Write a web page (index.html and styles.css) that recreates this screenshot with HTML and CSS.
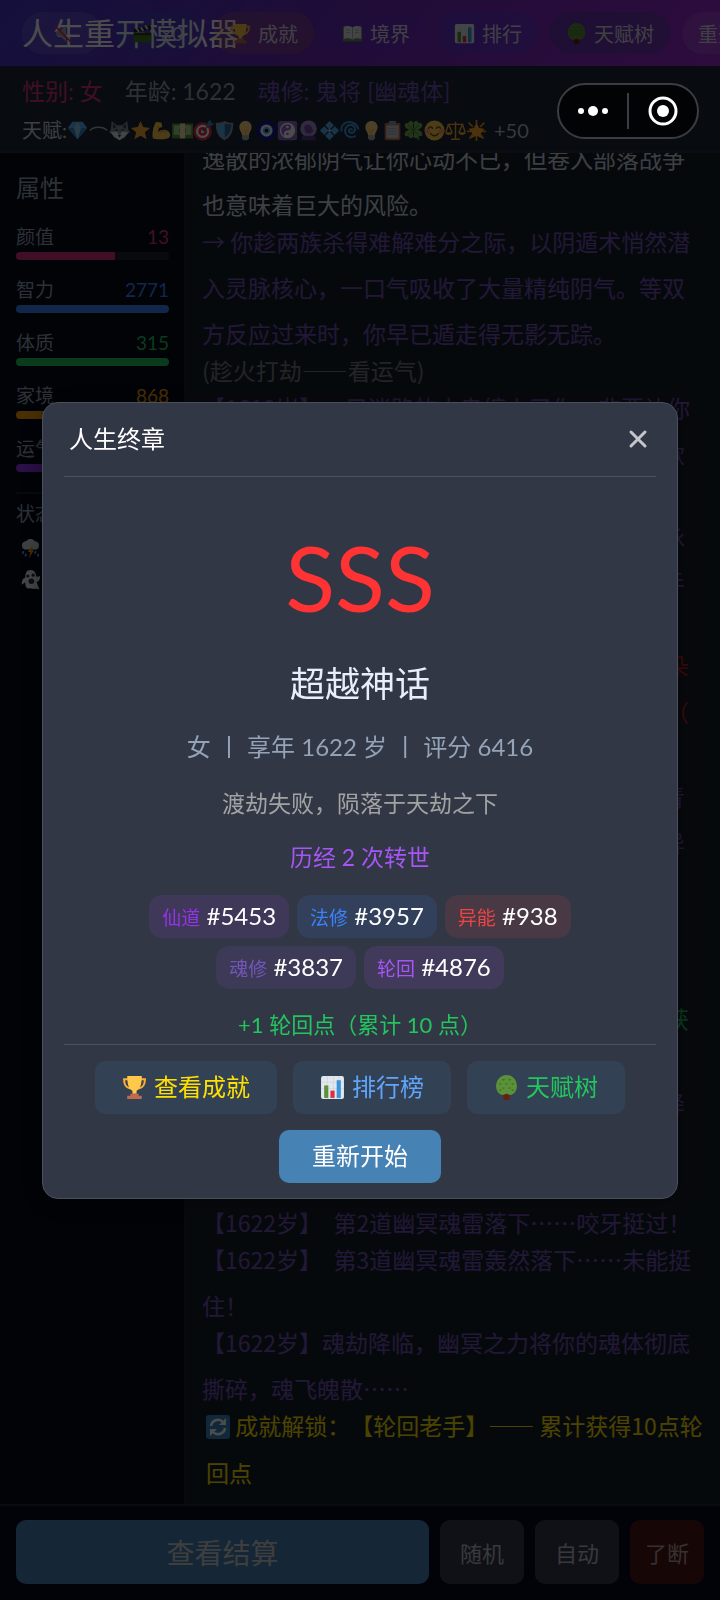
FILE: index.html
```
<!DOCTYPE html>
<html lang="zh-CN">
<head>
<meta charset="utf-8">
<title>人生重开模拟器</title>
<meta name="viewport" content="width=device-width,initial-scale=1">
<link rel="stylesheet" href="styles.css">
</head>
<body>
<!-- icon sprite -->
<svg class="sprite" xmlns="http://www.w3.org/2000/svg">
  <symbol id="mute" viewBox="0 0 24 24"><path d="M5 9h4l7-6v18l-7-6H5z" fill="#9aa5ad"/><path d="M3 3l18 18" stroke="#dd2e44" stroke-width="2"/></symbol>
  <symbol id="clapper" viewBox="0 0 24 24"><path d="M2 11h20v11H2z" fill="#3f7d20"/><path d="M2 7l19-5 1 5-20 4z" fill="#222"/><path d="M5 6l3 4M10 5l3 4M15 3l3 4" stroke="#ddd" stroke-width="2"/><path d="M2 11h20v3H2z" fill="#333"/></symbol>
  <symbol id="trophy" viewBox="0 0 24 24"><path d="M6 4H2c0 6 2 8 6 9M18 4h4c0 6-2 8-6 9" fill="none" stroke="#ffac33" stroke-width="2"/><path d="M5 1h14c0 9-2 13-5 14v3h-4v-3C7 14 5 10 5 1z" fill="#ffc84a"/><path d="M8 18h8v2h3v3H5v-3h3z" fill="#c1694f"/></symbol>
  <symbol id="book" viewBox="0 0 24 24"><path d="M1 5h22v16H1z" fill="#5c913b"/><path d="M2 4c4-1 7-1 10 1 3-2 6-2 10-1v14c-4-1-7-1-10 1-3-2-6-2-10-1z" fill="#dfe5e8"/><path d="M12 5v14M5 8h4M5 11h4M15 8h4M15 11h4" stroke="#99aab5"/></symbol>
  <symbol id="chart" viewBox="0 0 24 24"><rect x="1" y="1" width="22" height="22" rx="2" fill="#e1e8ed"/><path d="M1 7h22M1 13h22M7 1v22M13 1v22M18 1v22" stroke="#c8d4dc" stroke-width=".6"/><path d="M4 10h4v12H4z" fill="#5c913b"/><path d="M10 15h4v7h-4z" fill="#dd2e44"/><path d="M16 5h4v17h-4z" fill="#3b94d9"/></symbol>
  <symbol id="tree" viewBox="0 0 24 24"><path d="M9 17h6v7H9z" fill="#662113"/><path d="M12 0c6 0 10 5 10 11 0 4-3 8-6 8-1 1-2-1-4-1s-3 2-4 1c-3 0-6-4-6-8C2 5 6 0 12 0z" fill="#5c913b"/><path d="M8 4l1 1 1-1M14 4l1 1 1-1M5 8l1 1 1-1M11 8l1 1 1-1M17 8l1 1 1-1M8 12l1 1 1-1M14 12l1 1 1-1M5 14l1 1 1-1M17 14l1 1 1-1" fill="none" stroke="#3e721d"/></symbol>
  <symbol id="diamond" viewBox="0 0 24 24"><path d="M6 2h12l5 7-11 13L1 9z" fill="#5dadec"/><path d="M1 9h22L12 22z" fill="#3b88c3"/><path d="M8 9l4-7 4 7-4 13z" fill="#8ccaf7"/></symbol>
  <symbol id="arc" viewBox="0 0 24 24"><path d="M2 12c5-5 15-5 20 0" fill="none" stroke="#aeb6ba" stroke-width="1.6"/></symbol>
  <symbol id="wolf" viewBox="0 0 24 24"><path d="M3 1l6 5h6l6-5 1 10 2 3-3 2-3 4-6 3-6-3-3-4-3-2 2-3z" fill="#7d8f9b"/><path d="M5 4l3 4-3 2zM19 4l-3 4 3 2z" fill="#292f33"/><path d="M2 14l7-1 3 5 3-5 7 1-4 5-6 4-6-4z" fill="#e1e8ed"/><path d="M10 17h4l-2 3z" fill="#292f33"/><path d="M7 11l3 1M17 11l-3 1" stroke="#292f33" stroke-width="1.5"/></symbol>
  <symbol id="star" viewBox="0 0 24 24"><path d="M12 1l3 7 8 1-6 5 2 8-7-4-7 4 2-8-6-5 8-1z" fill="#ffac33"/></symbol>
  <symbol id="arm" viewBox="0 0 24 24"><path d="M6 2l6 1 1 5-4 1-1 5c5-5 13-3 14 3 0 5-9 6-20 4C1 14 3 6 6 2z" fill="#ffcc4d"/><path d="M9 9l-2-2M10 15c2-3 5-3 8-1" fill="none" stroke="#e39b2b" stroke-width="1.5"/></symbol>
  <symbol id="money" viewBox="0 0 24 24"><path d="M0 4h24v17H0z" fill="#5c913b"/><path d="M2 6h20v11H2z" fill="#a7d28b"/><circle cx="12" cy="12" r="4" fill="#5c913b"/><path d="M9 4h6v17H9z" fill="#ffe8b6"/></symbol>
  <symbol id="target" viewBox="0 0 24 24"><circle cx="11" cy="13" r="10.500" fill="#dd2e44"/><circle cx="11" cy="13" r="7.500" fill="#fff"/><circle cx="11" cy="13" r="5" fill="#dd2e44"/><circle cx="11" cy="13" r="2" fill="#fff"/><path d="M11 13l9-9" stroke="#557" stroke-width="1.500"/><path d="M16 7l1-5 3-2 1 3 3 1-3 3z" fill="#3b88c3"/></symbol>
  <symbol id="shield" viewBox="0 0 24 24"><path d="M12 1c3 2 6 2 10 2 0 9-2 16-10 20C4 19 2 12 2 3c4 0 7 0 10-2z" fill="#8899a6"/><path d="M12 4c2 1 5 1 8 1-1 8-3 12-8 15z" fill="#226699"/><path d="M12 4C10 5 7 5 4 5c1 8 3 12 8 15z" fill="#55acee"/></symbol>
  <symbol id="bulb" viewBox="0 0 24 24"><path d="M12 1c4 0 7 3 7 7 0 5-3 5-3 10H8c0-5-3-5-3-10 0-4 3-7 7-7z" fill="#ffd983"/><path d="M9 11l3 2 3-2M12 13v5" fill="none" stroke="#ffac33"/><path d="M8 18h8v3l-2 2h-4l-2-2z" fill="#99aab5"/></symbol>
  <symbol id="nazar" viewBox="0 0 24 24"><circle cx="12" cy="12" r="11" fill="#1414a0"/><circle cx="12" cy="12" r="7" fill="#e8f4fa"/><circle cx="12" cy="12" r="4" fill="#5dadec"/><circle cx="12" cy="12" r="2" fill="#000"/></symbol>
  <symbol id="yinyang" viewBox="0 0 24 24"><rect x="1" y="1" width="22" height="22" rx="3" fill="#9266cc"/><circle cx="12" cy="12" r="8" fill="none" stroke="#fff" stroke-width="1.500"/><path d="M12 4a8 8 0 0 1 0 16 4 4 0 0 1 0-8 4 4 0 0 0 0-8z" fill="#fff"/><circle cx="12" cy="16" r="1.500" fill="#9266cc"/><circle cx="12" cy="8" r="1.500" fill="#fff"/></symbol>
  <symbol id="crystal" viewBox="0 0 24 24"><circle cx="12" cy="10" r="9.500" fill="#aa8dd8"/><path d="M7 8c2-4 5-3 7-2 3 2 1 5 4 6-3 5-7 4-10 2z" fill="#744eaa"/><path d="M5 18h14l2 5H3z" fill="#553986"/></symbol>
  <symbol id="dots" viewBox="0 0 24 24"><path d="M12 1l5 5-5 5-5-5zM12 13l5 5-5 5-5-5zM6 7l5 5-5 5-5-5zM18 7l5 5-5 5-5-5z" fill="#55acee"/><path d="M12 10l2 2-2 2-2-2z" fill="#bbddf5"/></symbol>
  <symbol id="cyclone" viewBox="0 0 24 24"><path d="M14 12a2 2 0 1 0-3 2c4 2 7-1 6-5-2-5-10-4-11 2-1 7 6 11 12 7M21 11C20 4 12 0 5 4c-3 2-4 6-3 9" fill="none" stroke="#3b94d9" stroke-width="2.400"/></symbol>
  <symbol id="clipboard" viewBox="0 0 24 24"><rect x="3" y="3" width="18" height="20" rx="2" fill="#c1694f"/><path d="M5 6h14v15H5z" fill="#c6ced4"/><path d="M8 1h8v5H8z" fill="#8899a6"/><path d="M7 10h10M7 13h10M7 16h10" stroke="#99aab5"/></symbol>
  <symbol id="clover" viewBox="0 0 24 24"><path d="M12 12c2 3 5 5 6 11" fill="none" stroke="#5c913b" stroke-width="2"/><path d="M12 11C7 12 1 9 2 5c1-2 3-2 4-1 0-2 3-4 5-2 2 2 2 5 1 9zM12 11c5 1 11-2 10-6-1-2-3-2-4-1 0-2-3-4-5-2-2 2-2 5-1 9zM12 11c-5-1-11 2-10 6 1 2 3 2 4 1 0 2 3 4 5 2 2-2 2-5 1-9zM12 11c5-1 11 2 10 6-1 2-3 2-4 1 0 2-3 4-5 2-2-2-2-5-1-9z" fill="#77b255"/><path d="M6 6l12 11M18 6L6 17" stroke="#3e721d"/></symbol>
  <symbol id="smile" viewBox="0 0 24 24"><circle cx="12" cy="12" r="11.500" fill="#ffcc4d"/><path d="M5 10c1-3 4-3 5 0M14 10c1-3 4-3 5 0M7 15c3 4 7 4 10 0" fill="none" stroke="#664500" stroke-width="1.500"/><circle cx="4" cy="13" r="3" fill="#ff7892" opacity=".6"/><circle cx="20" cy="13" r="3" fill="#ff7892" opacity=".6"/></symbol>
  <symbol id="scales" viewBox="0 0 24 24"><path d="M12 2v19M7 22h10M3 5h18M4 5L1 14M4 5l4 9M20 5l-4 9M20 5l3 9" fill="none" stroke="#ffac33" stroke-width="1.600"/><path d="M0 14h9c-1 4-8 4-9 0zM15 14h9c-1 4-8 4-9 0z" fill="#ffac33"/></symbol>
  <symbol id="glow" viewBox="0 0 24 24"><path d="M12 3l3 6 6 1-4 5 2 6-7-3-7 3 2-6-4-5 6-1z" fill="#ffac33"/><path d="M12 0v5M3 3l5 5M21 3l-5 5M1 13h5M23 13h-5M4 21l4-5M20 21l-4-5M12 24v-6" stroke="#f4900c" stroke-width="2"/></symbol>
  <symbol id="storm" viewBox="0 0 24 24"><path d="M5 13a5 5 0 0 1 0-9c3 0 3-3 7-3s4 3 7 3a5 5 0 0 1 0 9z" fill="#d3dce2"/><path d="M13 10l-4 6h3l-2 7 6-9h-3l2-4z" fill="#f4900c"/><path d="M4 15l-1 3M7 18l-1 3M18 15l-1 3M21 18l-1 3" stroke="#55acee" stroke-width="2"/></symbol>
  <symbol id="ghost" viewBox="0 0 24 24"><path d="M12 1c5 0 6 4 7 8l4-1c0 5-2 6-4 7l3 8c-5-1-7 0-10-1-5 1-6-2-6-7l-4 3c0-5 1-7 4-8 0-5 1-9 6-9z" fill="#e1e8ed"/><circle cx="9" cy="8" r="1.800" fill="#292f33"/><circle cx="15" cy="7" r="1.800" fill="#292f33"/><circle cx="13" cy="14" r="3.200" fill="#292f33"/></symbol>
  <symbol id="refresh" viewBox="0 0 24 24"><rect width="24" height="24" rx="3" fill="#3b88c3"/><path d="M5 11a7 7 0 0 1 12-4M19 13a7 7 0 0 1-12 4" fill="none" stroke="#fff" stroke-width="2.500"/><path d="M20 3v7h-7zM4 21v-7h7z" fill="#fff"/></symbol>
</svg>

<div class="app">
  <header class="topbar">
    <h1>人生重开模拟器</h1>
    <nav class="toolbar">
      <button class="tool tool-sound" aria-label="静音"><svg class="icon"><use href="#mute"/></svg></button>
      <button class="tool tool-ad"><svg class="icon"><use href="#clapper"/></svg>×0</button>
      <button class="tool tool-gold"><svg class="icon"><use href="#trophy"/></svg>成就</button>
      <button class="tool tool-plain"><svg class="icon"><use href="#book"/></svg>境界</button>
      <button class="tool tool-blue"><svg class="icon"><use href="#chart"/></svg>排行</button>
      <button class="tool tool-green"><svg class="icon"><use href="#tree"/></svg>天赋树</button>
      <button class="tool">重开</button>
    </nav>
  </header>

  <section class="info">
    <div class="info-row">
      <span class="pink">性别: 女</span>
      <span>年龄: 1622</span>
      <span class="soul">魂修: 鬼将 [幽魂体]</span>
    </div>
    <div class="talents">
      <span>天赋:</span>
      <svg class="icon"><use href="#diamond"/></svg>
      <svg class="icon"><use href="#arc"/></svg>
      <svg class="icon"><use href="#wolf"/></svg>
      <svg class="icon"><use href="#star"/></svg>
      <svg class="icon"><use href="#arm"/></svg>
      <svg class="icon"><use href="#money"/></svg>
      <svg class="icon"><use href="#target"/></svg>
      <svg class="icon"><use href="#shield"/></svg>
      <svg class="icon"><use href="#bulb"/></svg>
      <svg class="icon"><use href="#nazar"/></svg>
      <svg class="icon"><use href="#yinyang"/></svg>
      <svg class="icon"><use href="#crystal"/></svg>
      <svg class="icon"><use href="#dots"/></svg>
      <svg class="icon"><use href="#cyclone"/></svg>
      <svg class="icon"><use href="#bulb"/></svg>
      <svg class="icon"><use href="#clipboard"/></svg>
      <svg class="icon"><use href="#clover"/></svg>
      <svg class="icon"><use href="#smile"/></svg>
      <svg class="icon"><use href="#scales"/></svg>
      <svg class="icon"><use href="#glow"/></svg>
      <span class="more">+50</span>
    </div>
  </section>

  <div class="content">
    <aside class="sidebar">
      <h2>属性</h2>
      <div class="stat pink"><div class="stat-row"><span>颜值</span><b>13</b></div><div class="bar"><i style="width:65%"></i></div></div>
      <div class="stat blue"><div class="stat-row"><span>智力</span><b>2771</b></div><div class="bar"><i style="width:100%"></i></div></div>
      <div class="stat green"><div class="stat-row"><span>体质</span><b>315</b></div><div class="bar"><i style="width:100%"></i></div></div>
      <div class="stat amber"><div class="stat-row"><span>家境</span><b>868</b></div><div class="bar"><i style="width:100%"></i></div></div>
      <div class="stat purple"><div class="stat-row"><span>运气</span></div><div class="bar"><i style="width:100%"></i></div></div>
      <div class="status">
        <h3>状态</h3>
        <svg class="icon"><use href="#storm"/></svg>
        <svg class="icon"><use href="#ghost"/></svg>
      </div>
    </aside>

    <main class="story">
      <p>逸散的浓郁阴气让你心动不已，但卷入部落战争<br>也意味着巨大的风险。</p>
      <p class="soul">→ 你趁两族杀得难解难分之际，以阴遁术悄然潜<br>入灵脉核心，一口气吸收了大量精纯阴气。等双<br>方反应过来时，你早已遁走得无影无踪。</p>
      <p class="note">(趁火打劫——看运气)</p>
      <p class="soul">【1612岁】一只迷路的小鬼缠上了你，非要让你<br>带它回家，你拗不过它，只好答应陪它走上一款<br>段路。</p>
      <p class="soul">一路上阴风阵阵，你听见远处的河面上有人在咏<br>唱古老的歌谣，小鬼忽然停下脚步，拉了拉你手<br>指向前方。</p>
      <p class="red wide">天雷自九霄劈落，漫天雷光之中竟开出一朵朵朵<br>血色莲花，你以魂力硬抗，魂体几近崩溃溃散（</p>
      <p class="soul">劫后余生。<br>你在废墟里醒来，四周一片寂静，身上只余一青<br>色的魂火，你小心翼翼地护着它，一步一步走异<br>出了这片死寂的荒原，前路漫漫，不知归处何，<br>你继续前行。</p>
      <p class="lime wide">成就解锁：【鬼将之威】—— 魂修境界达到史<br>诗级别的强者，历经千年修行终成正果，一举获</p>
      <p class="soul">【1622岁】阴云密布，鬼哭神嚎。<br>你的魂力已经臻至圆满，幽冥魂劫终于将要下降<br>临到你身上。</p>
      <p class="soul">【1622岁】&ensp;第1道幽冥魂雷落下……</p>
      <p class="soul">【1622岁】&ensp;第2道幽冥魂雷落下……咬牙挺过！</p>
      <p class="soul">【1622岁】&ensp;第3道幽冥魂雷轰然落下……未能挺<br>住！</p>
      <p class="soul">【1622岁】魂劫降临，幽冥之力将你的魂体彻底<br>撕碎，魂飞魄散……</p>
      <p class="gold wide"><svg class="icon"><use href="#refresh"/></svg> 成就解锁：【轮回老手】—— 累计获得10点轮<br>回点</p>
    </main>
  </div>

  <footer class="actions">
    <button class="btn-main">查看结算</button>
    <button>随机</button>
    <button>自动</button>
    <button class="btn-end">了断</button>
  </footer>
</div>

<div class="overlay">
  <div class="modal" role="dialog" aria-labelledby="modal-title">
    <div class="modal-head">
      <h2 id="modal-title">人生终章</h2>
      <button class="close" aria-label="关闭"><svg viewBox="0 0 20 20"><path d="M3 3l14 14M17 3L3 17"/></svg></button>
    </div>
    <div class="modal-body">
      <div class="grade">SSS</div>
      <div class="grade-name">超越神话</div>
      <div class="summary">女 丨 享年 1622 岁 丨 评分 6416</div>
      <div class="cause">渡劫失败，陨落于天劫之下</div>
      <div class="rebirth">历经 2 次转世</div>
      <div class="ranks">
        <span class="rank rank-xian"><em>仙道</em> #5453</span>
        <span class="rank rank-magic"><em>法修</em> #3957</span>
        <span class="rank rank-power"><em>异能</em> #938</span>
        <span class="rank rank-soul"><em>魂修</em> #3837</span>
        <span class="rank rank-wheel"><em>轮回</em> #4876</span>
      </div>
      <div class="points">+1 轮回点（累计 10 点）</div>
    </div>
    <div class="modal-foot">
      <button class="gold"><svg class="icon"><use href="#trophy"/></svg>查看成就</button>
      <button class="sky"><svg class="icon"><use href="#chart"/></svg>排行榜</button>
      <button class="lime"><svg class="icon"><use href="#tree"/></svg>天赋树</button>
      <button class="restart">重新开始</button>
    </div>
  </div>
</div>

<div class="capsule">
  <button aria-label="更多"><svg viewBox="0 0 32 12"><circle cx="4" cy="6" r="3"/><circle cx="16" cy="6" r="5"/><circle cx="28" cy="6" r="3"/></svg></button>
  <button aria-label="退出"><svg viewBox="0 0 32 32"><circle cx="16" cy="16" r="13" class="ring"/><circle cx="16" cy="16" r="6"/></svg></button>
</div>
</body>
</html>
```
FILE: styles.css
```
* { box-sizing: border-box; }
html, body { margin: 0; padding: 0; height: 100%; overflow: hidden; }
body { font-family: Lato, "Noto Sans CJK SC", sans-serif; text-spacing-trim: space-all; background: #000; color: #cbd5e1; }
h1, h2, h3, p { margin: 0; font-weight: normal; }
button { font-family: inherit; border: 0; padding: 0; color: inherit; cursor: pointer; white-space: nowrap; }
em, b, i { font-style: normal; font-weight: normal; }
.sprite { display: none; }
.icon { width: 21px; height: 21px; flex: none; }

.pink { color: #d63384; }
.blue { color: #3b82f6; }
.green, .lime { color: #22c55e; }
.amber { color: #f59e0b; }
.purple { color: #9333ea; }
.soul { color: #7350b8; }
.gold { color: #ffe000; }
.red { color: #c0241c; }
.sky { color: #60a5fa; }

.app { display: flex; flex-direction: column; height: 100vh; }

.topbar { position: relative; height: 66px; padding: 0 22px; display: flex; align-items: center; overflow: hidden; background: linear-gradient(135deg, #4338ca, #6d28b8 50%, #9a2bd0); }
.topbar h1 { font-size: 31px; line-height: 40px; color: #fff; white-space: nowrap; }
.toolbar { position: absolute; top: 12px; left: 22px; display: flex; gap: 12px; }
.tool { height: 42px; padding: 0 16px; border-radius: 21px; display: flex; align-items: center; justify-content: center; gap: 7px; font-size: 20px; color: #d8d8e4; background: rgba(255,255,255,.1); }
.tool-sound { width: 80px; }
.tool-ad { width: 88px; background: rgba(30,110,180,.15); }
.tool-gold { background: rgba(200,120,40,.2); }
.tool-plain { background: rgba(90,50,220,.2); }
.tool-blue { background: rgba(50,70,230,.25); }
.tool-green { background: rgba(40,70,120,.3); }

.info { padding: 10px 22px 7px; background: #1b2532; border-bottom: 2px solid #242e3e; white-space: nowrap; color: #94a3b8; }
.info-row { display: flex; gap: 22px; font-size: 23px; line-height: 30px; }
.talents { display: flex; align-items: center; margin-top: 10px; font-size: 20px; line-height: 28px; color: #cbd5e1; }
.more { margin-left: 7px; color: #b4bfce; }

.content { display: flex; flex: 1; min-height: 0; }
.sidebar { width: 186px; padding: 17px 15px 16px 16px; background: #040a18; border-right: 2px solid #182030; color: #94a3b8; }
.sidebar h2 { font-size: 24px; line-height: 36px; margin-bottom: 16px; }
.stat { margin-bottom: 15px; }
.stat-row { display: flex; justify-content: space-between; font-size: 19px; line-height: 30px; }
.stat-row span { color: #94a3b8; }
.bar { height: 8px; border-radius: 4px; background: #1e2430; overflow: hidden; }
.bar i { display: block; height: 100%; background: currentColor; }
.status { display: flex; flex-direction: column; gap: 10px; margin-top: 20px; padding-top: 6px; border-top: 2px solid #182030; }
.status h3 { font-size: 19px; line-height: 28px; }
.status .icon { margin-left: 4px; }

/* log is pinned to its last line */
.story { flex: 1; min-width: 0; overflow: hidden; display: flex; flex-direction: column; justify-content: flex-end; padding: 0 16px 8px; background: #171f2b; font-family: "Noto Sans CJK SC", sans-serif; font-size: 23px; line-height: 46px; white-space: nowrap; }
.story p { margin-top: -9px; flex: none; }
.story .wide { padding-left: 4px; line-height: 47px; }
.story .icon { width: 24px; height: 24px; vertical-align: -4px; }
.note { color: #737b80; }

.actions { display: flex; gap: 11px; padding: 14px 16px 16px; background: #070d1c; border-top: 2px solid #1a2434; }
.actions button { width: 84px; height: 64px; border-radius: 10px; font-size: 22px; color: #b9bfcc; background: #333a4a; }
.actions .btn-main { flex: 1; font-size: 28px; background: #4682b4; color: #d0d0d0; }
.actions .btn-end { width: 74px; background: #4a1414; color: #b8a0a0; }

.overlay { position: fixed; inset: 0; padding: 0 42px; display: flex; align-items: center; background: rgba(0,0,0,.7); }
.modal { flex: 1; min-width: 0; border: 1px solid #4a4f5e; border-radius: 16px; background: #323745; box-shadow: 0 4px 24px rgba(0,0,0,.4); overflow: hidden; }
.modal-head { display: flex; align-items: center; justify-content: space-between; height: 74px; margin: 0 21px; padding: 0 8px 0 5px; border-bottom: 1px solid #4c4f5d; }
.modal-head h2 { font-size: 24px; line-height: 36px; color: #fff; }
.close { width: 20px; height: 20px; background: none; }
.close svg { display: block; fill: none; stroke: #c4c6cb; stroke-width: 3; stroke-linecap: round; }

.modal-body { padding: 38px 60px 3px; text-align: center; line-height: 32px; font-size: 23px; }
.grade { font-size: 92px; line-height: 124px; color: #ff3333; }
.grade-name { margin-top: 20px; font-size: 35px; line-height: 48px; color: #e8eefc; }
.summary { margin-top: 24px; font-size: 24px; color: #94a3b8; }
.cause { margin-top: 24px; color: #a3a3a3; }
.rebirth { margin-top: 22px; color: #a855f7; }
.ranks { display: flex; flex-wrap: wrap; justify-content: center; gap: 8px; margin-top: 22px; }
.rank { padding: 0 13px; border-radius: 13px; font-size: 24px; line-height: 41px; color: #fff; }
.rank em { font-size: 19px; }
.rank-xian { background: #3f3859; }
.rank-xian em { color: #9333ea; }
.rank-magic { background: #33405c; }
.rank-magic em { color: #3b82f6; }
.rank-power { background: #483944; }
.rank-power em { color: #ef4444; }
.rank-soul { background: #3c3a57; }
.rank-soul em { color: #7356b8; }
.rank-wheel { background: #413a5a; }
.rank-wheel em { color: #a855f7; }
.points { margin-top: 20px; font-size: 22px; color: #22c55e; }

.modal-foot { display: flex; flex-wrap: wrap; justify-content: center; gap: 16px; margin: 0 21px; padding: 16px 0 15px; border-top: 1px solid #4c4f5d; }
.modal-foot button { display: flex; align-items: center; gap: 7px; height: 53px; padding: 0 27px; border-radius: 10px; font-size: 24px; line-height: 32px; background: #334155; }
.modal-foot .icon { width: 25px; height: 25px; }
.modal-foot .restart { padding: 0 33px; background: #4682b4; color: #fff; }

/* host app menu, floats above everything */
.capsule { position: fixed; top: 83px; right: 21px; width: 142px; height: 56px; display: flex; align-items: center; border: 2px solid #3b3d42; border-radius: 28px; background: #020305; }
.capsule button { flex: 1; height: 36px; display: flex; align-items: center; justify-content: center; background: none; }
.capsule button + button { border-left: 2px solid #3b3d42; }
.capsule svg { width: 32px; fill: #fff; }
.capsule .ring { fill: none; stroke: #fff; stroke-width: 3; }
```
